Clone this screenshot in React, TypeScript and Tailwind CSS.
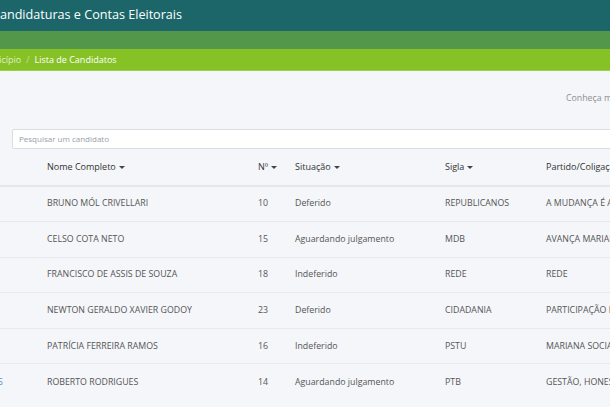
import React from "react";

const rows = [
  { nome: "BRUNO MÓL CRIVELLARI", num: "10", situacao: "Deferido", sigla: "REPUBLICANOS", partido: "A MUDANÇA É AGORA" },
  { nome: "CELSO COTA NETO", num: "15", situacao: "Aguardando julgamento", sigla: "MDB", partido: "AVANÇA MARIANA" },
  { nome: "FRANCISCO DE ASSIS DE SOUZA", num: "18", situacao: "Indeferido", sigla: "REDE", partido: "REDE" },
  { nome: "NEWTON GERALDO XAVIER GODOY", num: "23", situacao: "Deferido", sigla: "CIDADANIA", partido: "PARTICIPAÇÃO POPULAR" },
  { nome: "PATRÍCIA FERREIRA RAMOS", num: "16", situacao: "Indeferido", sigla: "PSTU", partido: "MARIANA SOCIALISTA" },
  { nome: "ROBERTO RODRIGUES", num: "14", situacao: "Aguardando julgamento", sigla: "PTB", partido: "GESTÃO, HONESTIDADE" },
];

const cols = "grid grid-cols-[47px_211px_37px_150px_101px_1fr]";

function Caret() {
  return (
    <span className="inline-block ml-[3px] align-middle border-x-[3px] border-t-[3.5px] border-x-transparent border-t-[#444]" />
  );
}

export default function App() {
  return (
    <div className="w-[610px] h-[407px] overflow-hidden bg-[#f4f6f9] font-['Open_Sans',sans-serif]">
      {/* Top bars */}
      <header className="h-[31px] bg-[#1c666a] flex items-center">
        <h1 className="-ml-[8px] text-white text-[12.6px] whitespace-nowrap">
          Candidaturas e Contas Eleitorais
        </h1>
      </header>
      <div className="h-[18px] bg-[#52974a]" />
      <nav className="h-[22px] bg-[#86c226] flex items-center text-[9px] whitespace-nowrap border-b border-[#9bd04a]">
        <span className="-ml-[20px] text-white/75">Município</span>
        <span className="mx-[5px] text-white/50">/</span>
        <span className="text-white">Lista de Candidatos</span>
      </nav>

      {/* Intro */}
      <div className="h-[53px] flex items-center pl-[566px] pt-[3px]">
        <p className="text-[8.8px] text-[#8c9095] whitespace-nowrap">Conheça mais sobre os candidatos</p>
      </div>

      {/* Search */}
      <div className="pl-[12px] -mr-[10px]">
        <input
          className="w-full h-[20px] bg-white border border-[#d8dde2] rounded-[2px] px-[6px] text-[8px] text-[#555] placeholder:text-[#9aa0a6] outline-none"
          placeholder="Pesquisar um candidato"
        />
      </div>

      {/* Table */}
      <div className="text-[8.8px] whitespace-nowrap">
        <div className={`${cols} h-[38px] items-center text-[#333] border-b-2 border-[#e3e7eb] text-[9px]`}>
          <span />
          <span>Nome Completo<Caret /></span>
          <span>Nº<Caret /></span>
          <span>Situação<Caret /></span>
          <span>Sigla<Caret /></span>
          <span>Partido/Coligação</span>
        </div>
        {rows.map((r, i) => (
          <div
            key={r.nome}
            className={`${cols} h-[35.6px] items-center text-[#555] ${i < rows.length - 1 ? "border-b border-[#e6e9ed]" : ""}`}
          >
            <span className="overflow-hidden">
              {i === rows.length - 1 && <span className="block -ml-[2px] text-[#5a95c4]">S</span>}
            </span>
            <span>{r.nome}</span>
            <span>{r.num}</span>
            <span>{r.situacao}</span>
            <span>{r.sigla}</span>
            <span>{r.partido}</span>
          </div>
        ))}
      </div>
    </div>
  );
}
